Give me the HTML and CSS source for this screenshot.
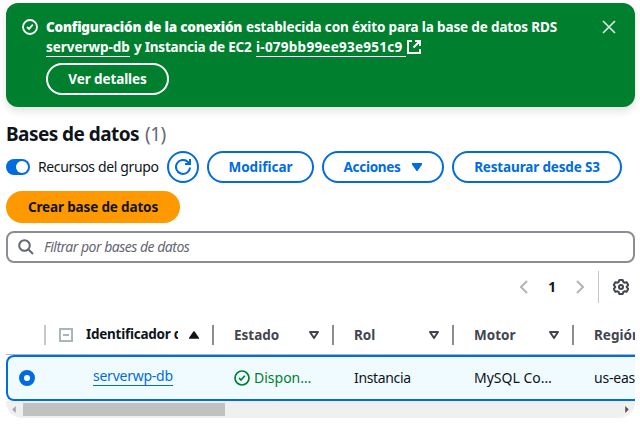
FILE: index.html
```html
<!DOCTYPE html>
<html lang="es">
<head>
<meta charset="utf-8">
<title>Bases de datos</title>
<link rel="stylesheet" href="styles.css">
</head>
<body>
<main class="page">
  <section class="flash">
    <svg class="icon flash-status" viewBox="0 0 16 16"><circle cx="8" cy="8" r="7"/><path d="M5 8l2 2 3.8-4.3"/></svg>
    <div class="flash-body">
      <div class="flash-line"><b class="t-conf">Configuración de la conexión</b> <span class="t-est">establecida con éxito para la base de datos RDS</span></div>
      <div class="flash-line"><a class="t-srv">serverwp-db</a> <span class="t-inst">y Instancia de EC2</span> <a class="t-id">i-079bb99ee93e951c9</a><svg class="icon external" viewBox="0 0 14 14"><path d="M5 1H1v12h12V9M8 1h5v5M13 1L6.500 7.500"/></svg></div>
      <button class="btn btn-flash">Ver detalles</button>
    </div>
    <svg class="icon close" viewBox="0 0 14 14"><path d="M1 1l12 12M13 1L1 13"/></svg>
  </section>

  <h1 class="title"><span>Bases de datos</span> <span class="count">(1)</span></h1>

  <div class="actions">
    <div class="toggle"><span class="switch"></span><span class="toggle-label">Recursos del grupo</span></div>
    <button class="btn btn-round"><svg class="icon" viewBox="0 0 16 16"><path d="M15 8.500a7 7 0 1 1-2-5.500l2 2M15 0v5h-5"/></svg></button>
    <button class="btn btn-edit">Modificar</button>
    <button class="btn btn-menu">Acciones<svg class="caret" viewBox="0 0 10 8"><path d="M0 0h10v1.500L5.500 8h-1L0 1.500z"/></svg></button>
    <button class="btn btn-restore">Restaurar desde S3</button>
    <button class="btn btn-primary">Crear base de datos</button>
  </div>

  <div class="search">
    <svg class="icon" viewBox="0 0 16 16"><circle cx="6.500" cy="6.500" r="5.300"/><path d="M10.500 10.500l4.500 4.500"/></svg>
    <span>Filtrar por bases de datos</span>
  </div>

  <div class="pager">
    <svg class="icon chevron" viewBox="0 0 8 14"><path d="M7 1L1 7l6 6"/></svg>
    <b class="page-number">1</b>
    <svg class="icon chevron" viewBox="0 0 8 14"><path d="M1 1l6 6-6 6"/></svg>
    <span class="pager-divider"></span>
    <svg class="icon gear" viewBox="0 0 16 16"><path d="M6.300 1h3.400l.6 2 1.300.7 2-.5 1.700 2.900-1.500 1.500v.8l1.500 1.500-1.700 2.900-2-.5-1.300.7-.6 2H6.300l-.6-2-1.300-.7-2 .5L.7 9.900l1.500-1.500v-.8L.7 6.100l1.700-2.900 2 .5L5.700 3z"/><circle cx="8" cy="8" r="2"/></svg>
  </div>

  <div class="table">
    <div class="row head">
      <div class="cell select"></div>
      <div class="cell ident"><span class="collapse"></span><span class="ident-text">Identificador de base</span><svg class="sort-up" viewBox="0 0 11 8"><path d="M5 0h1l5 7v1H0V7z"/></svg></div>
      <div class="cell"><span class="t-estado">Estado</span><svg class="sort" viewBox="0 0 10 8"><path d="M1 1h8L5 7z"/></svg></div>
      <div class="cell"><span>Rol</span><svg class="sort" viewBox="0 0 10 8"><path d="M1 1h8L5 7z"/></svg></div>
      <div class="cell"><span>Motor</span><svg class="sort" viewBox="0 0 10 8"><path d="M1 1h8L5 7z"/></svg></div>
      <div class="cell"><span>Región</span></div>
    </div>
    <div class="row selected">
      <div class="cell select"><span class="radio"></span></div>
      <div class="cell name"><a>serverwp-db</a></div>
      <div class="cell status"><svg class="icon" viewBox="0 0 16 16"><circle cx="8" cy="8" r="7"/><path d="M5 8l2 2 3.800-4.300"/></svg><span>Dispon…</span></div>
      <div class="cell t-role">Instancia</div>
      <div class="cell t-engine">MySQL Co…</div>
      <div class="cell t-region">us-east-1</div>
    </div>
    <div class="scrollbar">
      <svg class="arrow arrow-left" viewBox="0 0 4 8"><path d="M4 0v8L0 4z"/></svg>
      <span class="thumb"></span>
      <svg class="arrow arrow-right" viewBox="0 0 4 8"><path d="M0 0v8l4-4z"/></svg>
    </div>
  </div>
</main>
</body>
</html>
```
FILE: styles.css
```css
* { box-sizing: border-box; }
body {
  margin: 0;
  height: 426px;
  overflow: hidden;
  background: #fff;
  color: #0f141a;
  font: 14px/20px "Noto Sans", "Open Sans", sans-serif;
}
.page { width: 629px; margin-left: 6px; padding-top: 3px; }
.icon { display: block; flex: none; width: 16px; height: 16px; fill: none; stroke: currentColor; stroke-width: 2; }

.flash {
  display: flex;
  height: 104px;
  padding: 14px 19px 0 16px;
  border-radius: 12px;
  background: #00802f;
  color: #fff;
  font-size: 13.500px;
  font-weight: 700;
  box-shadow: 0 4px 8px rgba(0, 7, 22, .12);
}
.flash-status { margin: 2px 8px 0 0; stroke-width: 1.800; }
.flash-body { flex: 1; min-width: 0; }
.flash-line { display: flex; gap: 4px; height: 20px; white-space: nowrap; }
.flash-line a { height: 20px; border-bottom: 1px solid #fff; }
.t-conf { width: 196px; letter-spacing: -.2px; }
.t-est { letter-spacing: -.14px; }
.t-srv { width: 84px; letter-spacing: -.03px; }
.t-inst { width: 118px; letter-spacing: -.22px; }
.t-id { width: 150px; letter-spacing: .26px; }
.external { width: 14px; height: 14px; margin: 3px 0 0 -3px; }
.close { width: 14px; height: 14px; margin-top: 3px; stroke: #dce9df; stroke-width: 1.700; }

.btn {
  display: flex;
  align-items: center;
  justify-content: center;
  height: 32px;
  padding: 0;
  border: 2px solid #006ce0;
  border-radius: 16px;
  background: #fff;
  color: #006ce0;
  font: 700 13.500px/20px "Noto Sans", "Open Sans", sans-serif;
  white-space: nowrap;
}
.btn-flash { width: 123px; margin-top: 6px; border-color: #fff; background: transparent; color: #fff; letter-spacing: -.1px; }
.btn-round { width: 32px; }
.btn-edit { width: 107px; letter-spacing: 0; }
.btn-menu { width: 122px; gap: 12px; letter-spacing: -.3px; }
.caret { width: 10px; height: 8px; fill: currentColor; }
.btn-restore { width: 170px; letter-spacing: -.15px; }
.btn-primary { width: 174px; border-color: #ff9900; background: #ff9900; color: #0f141a; letter-spacing: -.15px; }

.title { display: flex; gap: 6px; height: 24px; margin: 15px 0 5px; font-size: 19px; line-height: 24px; letter-spacing: -.55px; }
.count { color: #656871; font-weight: 400; }

.actions { display: flex; flex-wrap: wrap; gap: 8px; }
.toggle { display: flex; align-items: center; width: 153px; white-space: nowrap; }
.switch { display: flex; flex: none; justify-content: flex-end; width: 24px; height: 16px; margin-right: 8px; padding: 2px; border-radius: 8px; background: #006ce0; }
.switch::after { content: ""; width: 12px; height: 12px; border-radius: 50%; background: #fff; }
.toggle-label { letter-spacing: -.37px; }

.search {
  display: flex;
  align-items: center;
  gap: 10px;
  height: 32px;
  margin-top: 8px;
  padding: 0 10px;
  border: 2px solid #8c8c94;
  border-radius: 8px;
  color: #656871;
  font-style: italic;
  letter-spacing: -.5px;
}

.pager { display: flex; align-items: center; justify-content: flex-end; height: 32px; margin-top: 8px; padding-right: 6px; }
.chevron { width: 8px; height: 14px; color: #b4b4bb; }
.page-number { width: 48px; text-align: center; font-size: 13.500px; }
.pager-divider { width: 1px; height: 32px; margin-left: 14px; background: #c6c6cd; }
.gear { margin-left: 14px; color: #424650; stroke-linejoin: round; }

.table { margin-top: 12px; overflow: hidden; border-radius: 0 0 16px 16px; }
.row { display: grid; grid-template-columns: 40px 168px repeat(4, 120px); width: 629px; overflow: hidden; }
.cell { display: flex; align-items: center; min-width: 0; padding-left: 20px; white-space: nowrap; }
.head { height: 40px; border-bottom: 1px solid #b4b4bb; color: #424650; font-size: 13.500px; font-weight: 700; }
.head .cell { justify-content: space-between; height: 20px; margin-top: 10px; padding-right: 13px; border-right: 2px solid #8c8c94; }
.head .cell.select { border-color: #c6c6cd; }
.head .cell.ident { justify-content: flex-start; padding: 0 13px 0 13px; color: #0f141a; }
.collapse { display: flex; align-items: center; justify-content: center; flex: none; width: 14px; height: 14px; border: 2px solid #aab7b8; }
.collapse::after { content: ""; width: 6px; height: 2px; background: #aab7b8; }
.ident-text { width: 92px; margin: 0 11px 2px 13px; overflow: hidden; letter-spacing: -.25px; }
.sort-up { flex: none; width: 10px; height: 8px; fill: #0f141a; }
.sort { width: 10px; height: 8px; fill: none; stroke: #424650; stroke-width: 2; stroke-linejoin: round; }

.selected { height: 46px; border: 2px solid #006ce0; border-right: 0; border-radius: 8px 0 0 8px; background: #f0fbff; }
.selected .cell { padding-left: 18px; }
.selected .select { padding-left: 11px; }
.radio { width: 16px; height: 16px; border: 5px solid #006ce0; border-radius: 50%; background: #fff; }
.selected .name { padding: 0 0 4px 45px; color: #006ce0; letter-spacing: -.25px; }
.name a { height: 20px; line-height: 19px; border-bottom: 1px solid #006ce0; }
.selected .status { gap: 4px; color: #00802f; }
.status .icon { stroke-width: 1.700; }
.t-role { letter-spacing: -.35px; }
.t-region { letter-spacing: -.2px; }

.scrollbar { display: flex; align-items: center; height: 17px; padding: 0 6px; background: #f0f0f0; }
.arrow { width: 4px; height: 7px; fill: #a3a3a3; }
.thumb { width: 202px; height: 13px; margin-left: 7px; background: #c1c1c1; }
.arrow-right { margin-left: auto; fill: #505050; }
```
